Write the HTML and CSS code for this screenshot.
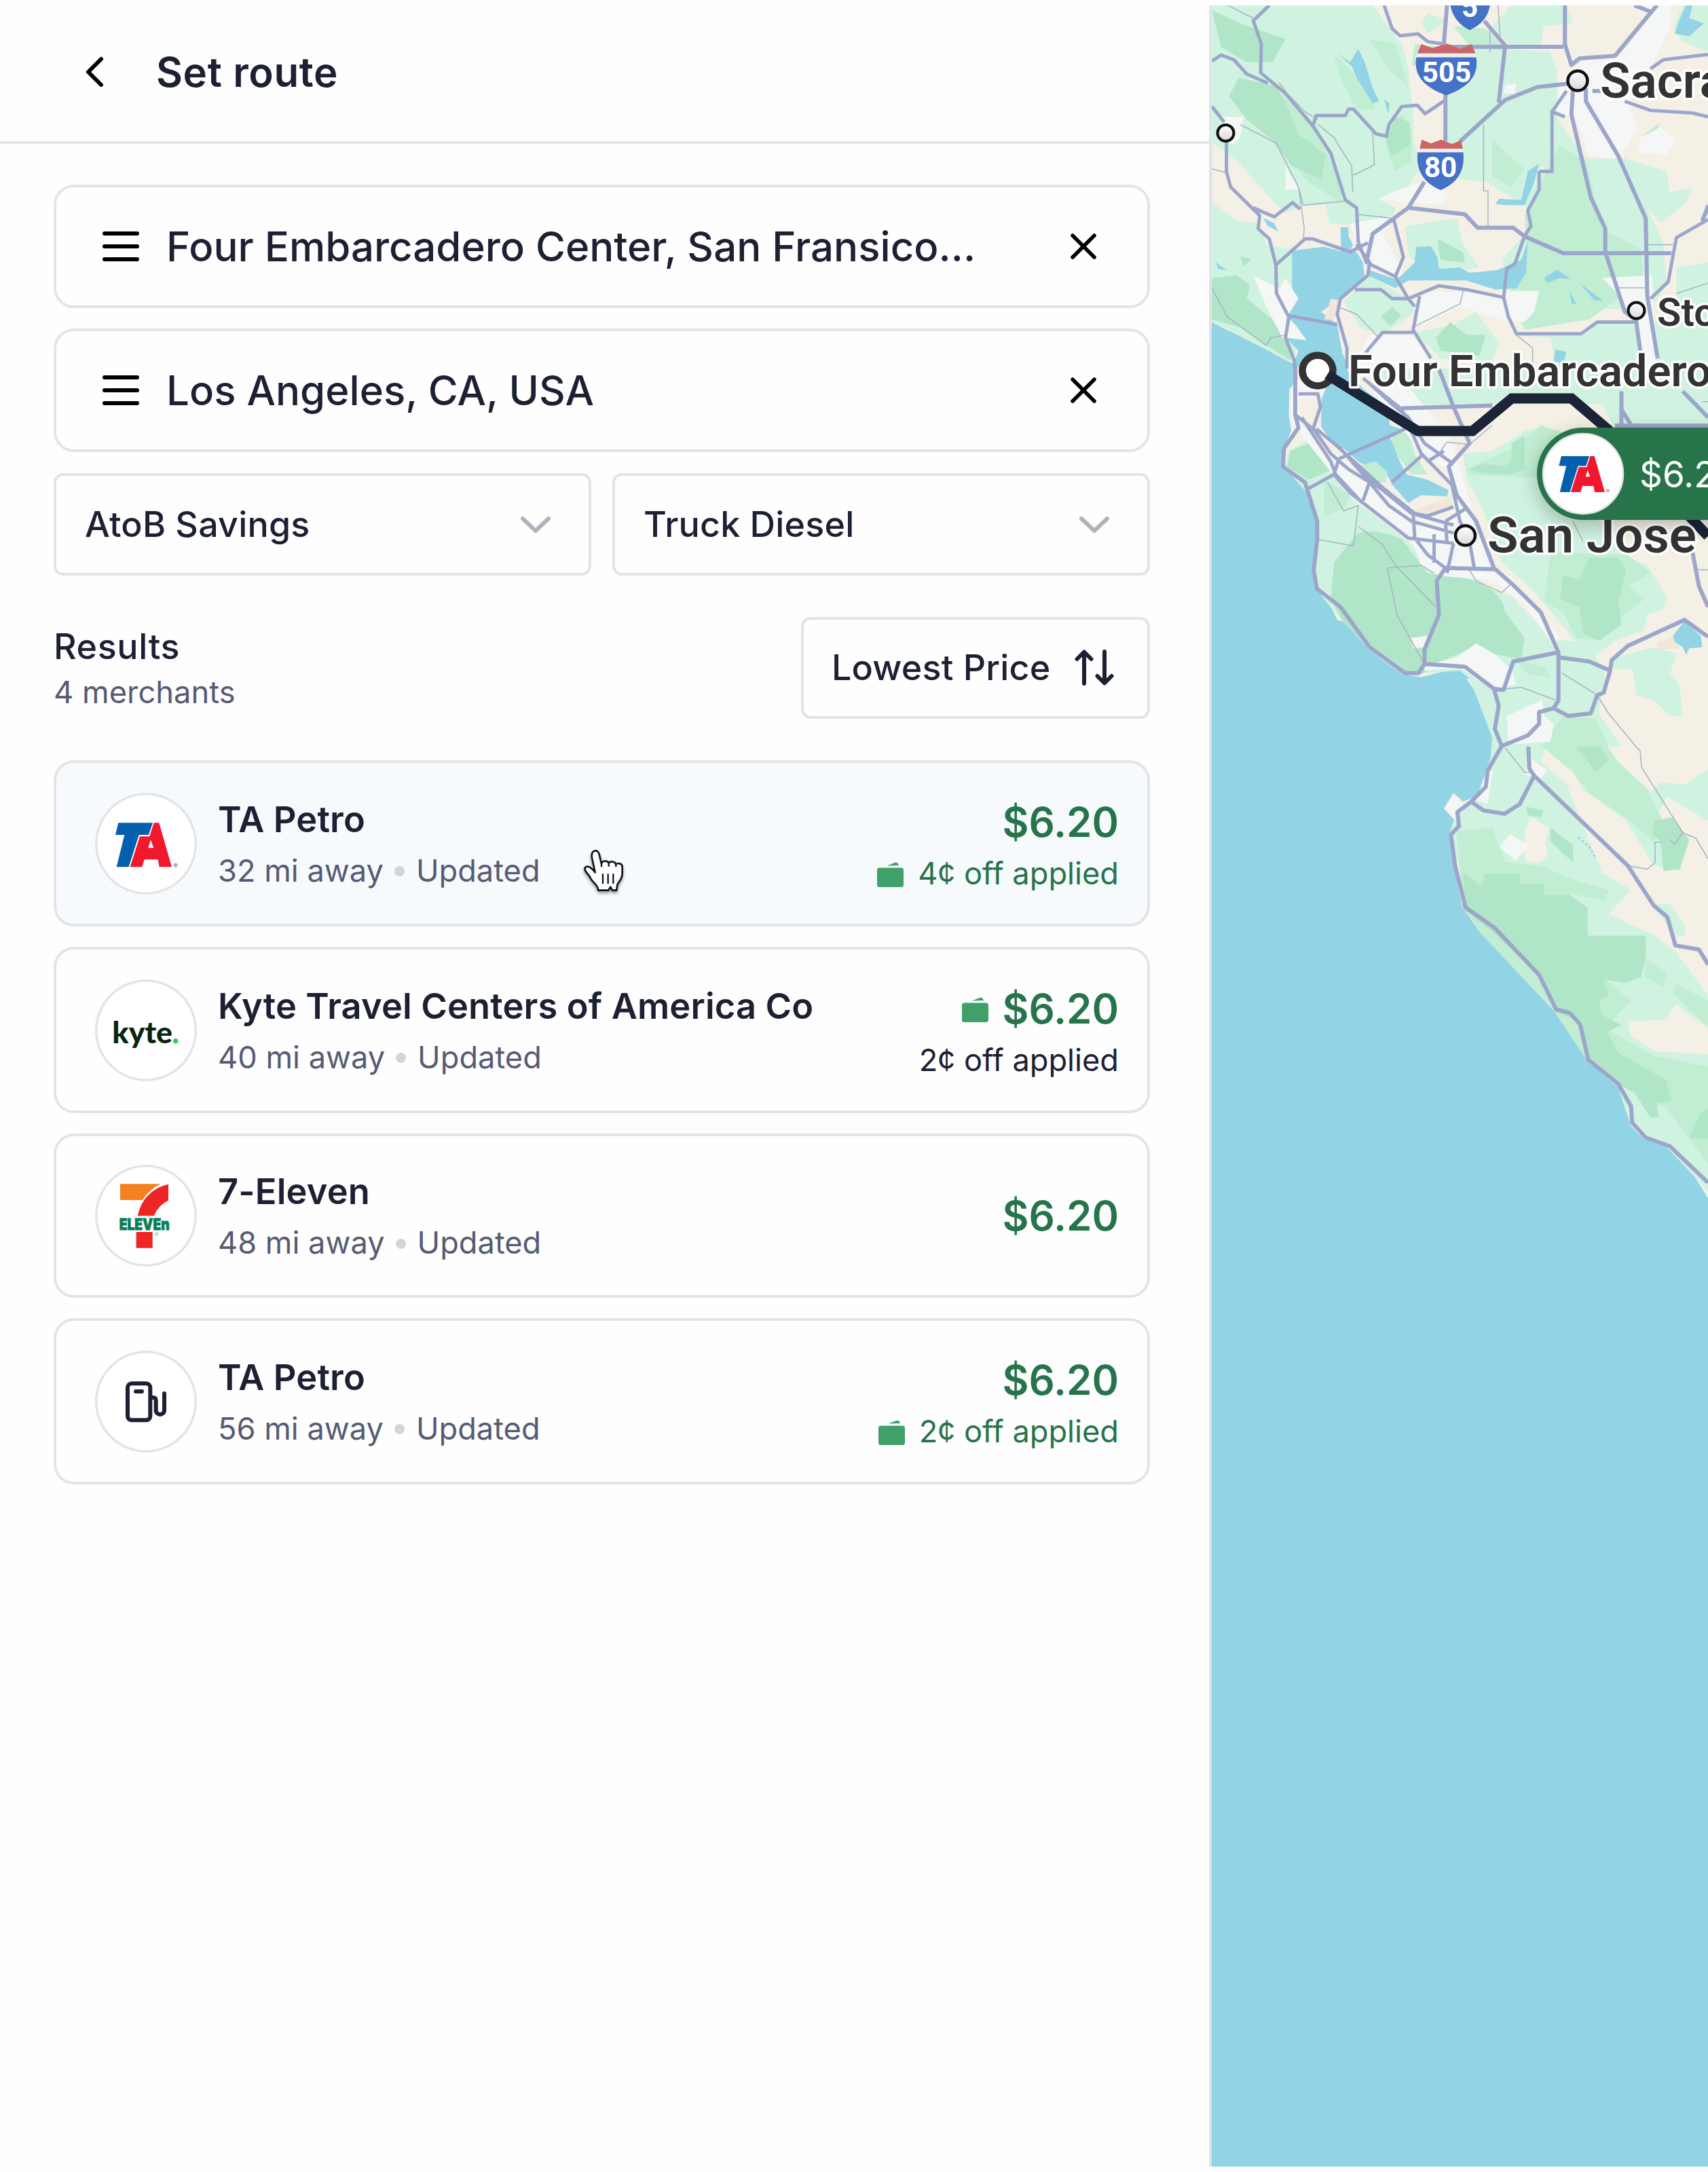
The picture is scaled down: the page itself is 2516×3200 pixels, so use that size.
FILE: index.html
```html
<!DOCTYPE html>
<html lang="en">
<head>
<meta charset="utf-8">
<title>Set route</title>
<link rel="stylesheet" href="styles.css">
</head>
<body>
<svg class="sprite" aria-hidden="true">
  <symbol id="ta-logo" viewBox="60 50 450 450">
    <path fill="#0460ae" d="M163 183H315L297 236H254L209 378H155L190 236H150Z"/>
    <path fill="#f0182d" fill-rule="evenodd" d="M320 183H343L399 378H344L338 345H278L268 378H215L258 243H301ZM306 258L295 294H319Z"/>
    <circle cx="416" cy="370" r="8" fill="none" stroke="#999" stroke-width="3"/><circle cx="416" cy="370" r="4" fill="#777"/>
  </symbol>
  <symbol id="wallet" viewBox="0 0 39 37">
    <path fill="#40a069" d="M3.500 8.500H35.500Q39 8.500 39 12V33.500Q39 37 35.500 37H3.500Q0 37 0 33.500V12Q0 8.500 3.500 8.500ZM14.500 5.500L27 .800Q30.500 0 32 5Z"/>
  </symbol>
  <symbol id="grip" viewBox="0 0 54 44">
    <path d="M3 3H51M3 22H51M3 41H51" fill="none" stroke="#000" stroke-width="6" stroke-linecap="round"/>
  </symbol>
  <symbol id="close" viewBox="0 0 40 40">
    <path d="M4 4L36 36M36 4L4 36" fill="none" stroke="#000" stroke-width="5.500" stroke-linecap="round"/>
  </symbol>
  <symbol id="chevron" viewBox="0 0 46 28">
    <path d="M4 4L23 22L42 4" fill="none" stroke="#b0b3bc" stroke-width="6" stroke-linecap="round" stroke-linejoin="round"/>
  </symbol>
</svg>

<div class="app">
  <main class="panel">
    <header class="header">
      <svg class="back" viewBox="0 0 26 46"><path d="M23 4L4 23L23 42" fill="none" stroke="#000" stroke-width="6" stroke-linecap="round" stroke-linejoin="round"/></svg>
      <h1 class="title">Set route</h1>
    </header>

    <div class="content">
      <div class="stops">
        <div class="stop"><svg class="grip"><use href="#grip"/></svg><span class="stop-name">Four Embarcadero Center, San Fransico...</span><svg class="close"><use href="#close"/></svg></div>
        <div class="stop"><svg class="grip"><use href="#grip"/></svg><span class="stop-name">Los Angeles, CA, USA</span><svg class="close"><use href="#close"/></svg></div>
      </div>

      <div class="filters">
        <div class="select"><span>AtoB Savings</span><svg class="chevron"><use href="#chevron"/></svg></div>
        <div class="select"><span>Truck Diesel</span><svg class="chevron"><use href="#chevron"/></svg></div>
      </div>

      <div class="results-bar">
        <div class="results-text">
          <h2 class="results-title">Results</h2>
          <div class="results-count">4 merchants</div>
        </div>
        <div class="sort">
          <span>Lowest Price</span>
          <svg class="sort-icon" viewBox="0 0 58 53"><path d="M14 50V4M3.500 14L14 3.500L24.500 14M44 3V49M33.500 39L44 49.500L54.500 39" fill="none" stroke="#1c2033" stroke-width="6" stroke-linecap="round" stroke-linejoin="round"/></svg>
        </div>
      </div>

      <div class="cards">
        <article class="card active">
          <div class="logo"><svg viewBox="60 50 450 450"><use href="#ta-logo" x="60" y="50" width="450" height="450"/></svg></div>
          <div class="info">
            <h3 class="name">TA Petro</h3>
            <div class="meta"><span>32 mi away</span><i class="dot"></i><span>Updated</span></div>
          </div>
          <div class="price-box">
            <div class="price">$6.20</div>
            <div class="discount"><svg class="wallet"><use href="#wallet"/></svg>4¢ off applied</div>
          </div>
          <svg class="cursor" viewBox="0 0 240 240">
            <path d="M80 136L66 72C60 36 92 30 98 56L108 98C112 82 136 82 140 96C146 84 168 86 172 101C180 92 200 96 200 112V140C200 164 188 172 178 190L175 215H156L148 200L138 215H94C92 188 68 182 58 158C50 142 28 128 36 114C46 102 64 116 80 136Z" fill="#fff" stroke="#10141c" stroke-width="8" stroke-linejoin="round"/>
            <path d="M108 98V112M140 98V110M172 102V112M114 142V186M137 142V186M160 142V186" fill="none" stroke="#10141c" stroke-width="7"/>
          </svg>
        </article>

        <article class="card">
          <div class="logo"><svg viewBox="60 876 450 450">
            <text class="kyte" x="136" y="1158" textLength="266" lengthAdjust="spacingAndGlyphs">kyte</text>
            <circle cx="416" cy="1148" r="11" fill="#1fd65a"/>
          </svg></div>
          <div class="info">
            <h3 class="name">Kyte Travel Centers of America Co</h3>
            <div class="meta"><span>40 mi away</span><i class="dot"></i><span>Updated</span></div>
          </div>
          <div class="price-box">
            <div class="price"><svg class="wallet"><use href="#wallet"/></svg>$6.20</div>
            <div class="discount plain">2¢ off applied</div>
          </div>
        </article>

        <article class="card short">
          <div class="logo"><svg viewBox="60 45 450 450">
            <path fill="#f58020" d="M171 130H349Q298 156 270 201H171Z"/>
            <path fill="#ee2524" d="M384 131V203Q340 224 320 271H248Q273 158 384 131ZM242 342H314V413H242Z"/>
            <text class="eleven" x="167" y="332" textLength="222" lengthAdjust="spacingAndGlyphs">ELEVEn</text>
            <circle cx="332" cy="351" r="6" fill="none" stroke="#6fae9a" stroke-width="3"/>
          </svg></div>
          <div class="info">
            <h3 class="name">7-Eleven</h3>
            <div class="meta"><span>48 mi away</span><i class="dot"></i><span>Updated</span></div>
          </div>
          <div class="price-box single"><div class="price">$6.20</div></div>
        </article>

        <article class="card">
          <div class="logo"><svg viewBox="60 866 450 450">
            <g fill="none" stroke="#1c2036" stroke-width="18" stroke-linecap="round" stroke-linejoin="round">
              <rect x="204" y="1011" width="100" height="162" rx="18"/>
              <path d="M240 1046H267M311 1073H316Q329 1073 329 1086V1133A19 19 0 0 0 366 1133V1055"/>
            </g>
          </svg></div>
          <div class="info">
            <h3 class="name">TA Petro</h3>
            <div class="meta"><span>56 mi away</span><i class="dot"></i><span>Updated</span></div>
          </div>
          <div class="price-box">
            <div class="price">$6.20</div>
            <div class="discount"><svg class="wallet"><use href="#wallet"/></svg>2¢ off applied</div>
          </div>
        </article>
      </div>
    </div>
  </main>

  <aside class="map">
    <svg class="map-canvas" viewBox="1785 8 731 3184">
      <defs>
        <linearGradient id="pin" x1="0" y1="0" x2="0" y2="1"><stop offset="0" stop-color="#fff"/><stop offset="1" stop-color="#d8d8d8"/></linearGradient>
      </defs>

      <!-- central coast -->
      <g transform="translate(1770 1000) scale(.47577 .5102)">
        <path class="land" d="M820 0L850 40L880 110L900 170L895 230L882 300L850 340L810 355L780 330L750 375L785 410L766 450L785 560L808 660L860 730L940 765L1042 860L1092 960L1137 970L1165 1000L1192 1100L1290 1180L1325 1240L1328 1290L1370 1330L1440 1352L1515 1420L1568 1500V0Z"/>
        <path class="g1" d="M830 0H1120L1100 90L1200 120L1290 240L1390 325L1420 300L1500 305L1568 260V410L1440 340L1400 420L1510 470L1480 555L1400 540L1310 405L1180 320L1110 200L1065 200L1050 240L1130 305L1240 560L1330 610L1260 680L1400 740L1470 790L1568 915V1010L1470 940L1430 985L1320 990L1330 1030L1400 1075L1568 1085V1480L1440 1352L1328 1290L1290 1180L1192 1100L1092 960L860 730L766 450L785 400L850 350L895 230L900 170Z"/>
        <path class="g1" d="M1338 0H1480L1498 105L1470 110L1440 80L1370 60ZM1395 650L1450 650L1500 720L1495 745L1465 740Z"/>
        <path class="g2" d="M1090 110L1200 120L1290 240L1380 320L1440 430L1400 470L1310 400L1200 330L1150 270L1060 200ZM790 440L900 430L940 530L1050 540L1150 580L1260 610L1250 640L1140 620L1200 740L1240 860L1330 930L1250 1010L1400 1090L1568 1120V1400L1440 1240L1330 1190L1192 1100L1092 960L860 730L808 660ZM1380 810L1440 850L1430 890L1370 860ZM1470 880L1568 930V1005L1460 910Z"/>
        <path class="g3" d="M1130 165L1200 170L1235 145L1258 170L1230 190L1262 235L1220 270L1180 220ZM875 563H985V593H1060V625H1140L1195 660V742H1375V810L1360 862L1310 878L1245 870L1262 915L1232 930L1240 970L1300 1000L1255 1020L1290 1080L1440 1160L1455 1220L1410 1225L1415 1265L1390 1268L1340 1195L1290 1170L1192 1100L1165 990L1092 960L1045 860L900 730L815 670L810 560L868 600ZM1400 410L1460 400L1510 465L1480 550L1430 555L1422 470L1396 450ZM1540 1260L1568 1240V1330L1510 1325ZM1005 370L1060 380L1050 400L1010 395ZM1080 430L1150 480L1150 530L1080 470Z"/>
        <path class="land" d="M1020 398L1078 432L1065 470L1070 515L1040 533L1000 525L1000 440Z"/>
        <path class="town" d="M942 110L1055 62L1058 105L1092 130L1080 180L1000 192H945ZM780 332L810 365L790 385V410L752 375ZM922 485L955 450L1015 480L972 525ZM885 260L902 268L885 362L850 350ZM1020 230L1070 265L1050 290L1000 275Z"/>
        <path class="thin" d="M920 30L990 25L1100 65M1140 0L1220 45L1250 110L1358 208L1362 255L1490 445L1530 460L1568 520M940 200L1000 270H1025M1320 540L1380 550L1405 530L1403 472H1425M1450 465L1465 478L1490 443M1240 0L1250 95H1205"/>
        <path class="creek" d="M1165 458L1200 485L1218 514"/>
        <path class="road" d="M860 0L905 32L938 30L948 0M905 32L918 80L908 140L932 190L886 265L880 312L835 355L792 385L797 425L772 450L785 540L817 660L908 720L1045 855L1098 955L1140 965L1172 998L1197 1100L1290 1170L1330 1235L1333 1282L1375 1325L1450 1350L1568 1455M932 190L1010 160L1045 130L1040 95L1088 88L1108 70V0M1088 88L1135 110L1205 100L1225 48L1245 40L1260 0M1010 160L1015 260L1030 280L985 362L938 390L872 380L835 355M1030 280L1320 540L1400 655L1442 688L1467 770L1540 782L1568 825"/>
      </g>

      <!-- peninsula and San Jose -->
      <g transform="translate(1770 500) scale(.47577 .38265)">
        <path class="land" d="M160 0L230 60L285 95L300 160L272 190L270 290L280 370L250 420L250 490L320 560L345 670L358 740L342 900L355 960L405 1040L420 1080L445 1090L520 1195L620 1290L680 1300L760 1275L800 1275L845 1320L880 1400L905 1568H1568V0Z"/>
        <path class="g1" d="M560 0H1120L1180 30L1568 0V340H1280L1240 250L600 250L560 210ZM270 430L340 380L420 500L470 620L560 700L650 790L700 870L730 925L830 890L880 950L960 990L1060 1120L1120 1160L1200 1170L1250 1290L1230 1440L1300 1568H905L880 1400L845 1320L800 1275L640 1290L520 1195L420 1060L350 950L360 740L340 610L255 490ZM810 440L900 430L1010 345L1140 360V640L1300 750L1320 840L1380 870L1440 990L1430 1040L1380 1060L1370 1120L1280 1160L1200 1240L1130 1120L1020 960L930 860L870 650L820 540ZM1260 1230L1400 1185L1470 1210L1450 1290L1480 1330L1490 1450L1450 1450L1400 1390L1345 1370L1335 1270L1280 1270Z"/>
        <path class="g2" d="M590 350L640 360L660 440L700 520L650 520L590 420ZM1050 330L1120 360V540L830 520L820 500L960 420ZM1080 820L1320 830L1390 900L1320 950L1370 1000L1290 1080L1240 1160L1160 1150L1120 1050L1060 1010ZM970 1230L1060 1260L1080 1300L1010 1290ZM1120 1450L1220 1460L1260 1568H1050ZM490 490L540 475L570 540L520 545ZM380 540L460 600L440 650L380 680Z"/>
        <path class="g3" d="M275 430L350 390L410 500L330 540L265 490ZM480 750Q530 720 620 770L700 900L820 920Q930 960 940 1050L1000 1150L990 1230L900 1210L850 1180L760 1230L680 1290H620L520 1190L440 1090L400 1000L410 860ZM1200 840H1290L1315 890L1290 1010L1300 1100L1230 1160L1180 1130L1170 1030L1110 1000L1120 910L1170 925ZM960 400L1000 370V500L960 520L870 515L830 500L870 480L940 490L960 460ZM740 0H870V40L740 20Z"/>
        <path class="town" d="M285 150L385 180L370 220L300 230L310 330L400 430L460 480L510 550L590 590L650 670L760 690L780 600L760 500L680 440L620 340L520 180L620 150L770 380L800 500L850 700L900 870L960 920L1110 1150L1090 1180L1000 1020L900 930L740 910L680 870L650 770L490 620L400 510L285 330L255 420L285 360L275 250ZM790 1225L850 1170L905 1210L960 1270L975 1330L900 1345L800 1265L690 1275V1255ZM648 1150L705 1140L690 1185L655 1190ZM945 1450L1055 1388L1060 1450L1090 1480L1080 1550L950 1560Z"/>
        <path class="sand" d="M650 660L720 630L770 605L780 640L700 670ZM1410 1170L1465 1140L1480 1190L1410 1195Z"/>
        <path class="bay" d="M285 0H440L452 120L500 190L580 265L582 330L630 350L585 380L610 460L635 520L700 540L765 580L760 605L680 600L640 630L590 560L570 510L490 475L440 420L400 390L370 335L372 230L395 150L370 60L290 60Z"/>
        <path class="water" d="M1460 1140L1495 1085L1545 1140L1550 1185L1510 1190L1500 1215L1490 1185L1465 1165ZM1090 35L1130 40L1125 90L1095 80Z"/>
        <path class="land" d="M303 235L360 220L358 290L335 335L303 280Z"/>
        <path class="g2" d="M490 485L540 470L575 510L570 550L530 550Z"/>
        <path class="thin" d="M1000 0L1030 40V100M360 770L470 795L485 640L440 660L390 550M485 720L560 790L600 870L725 1030M575 880L680 870L720 900M575 880L585 940L605 1060L685 1240M830 890L850 930L930 975L955 945M900 330L830 405L760 395L740 430M1115 1285L1220 1365M910 1350L990 1340L1100 1390M1225 1370L1260 1440L1345 1568M1150 700L1180 775M1530 887H1568M1550 240H1568"/>
        <path class="road mid" d="M300 210H360L368 260L345 345M290 290L350 350L400 440L455 500L520 550L580 640L650 700L780 745M355 345L430 420L500 520L590 610L650 670L780 715M330 575L410 520L425 460L630 345M310 300L400 470L415 520L490 620L640 765L780 785M410 400L560 570L660 670L700 680L780 645M410 520L460 590L490 620M520 550L500 620M500 150L620 270L680 440L775 560L800 700L830 780L845 885M520 170L590 250L640 300L690 400L780 480M590 550L680 450M700 470L750 430M655 665L660 765L700 830L755 880M755 700L760 785M755 700L820 650M720 750V860M780 785L760 900"/>
        <path class="road" d="M255 0L290 100L290 290L300 340L255 420L252 490L320 550L358 700L358 770L347 890L357 960L430 1030L520 1185L630 1285H672L690 1250L815 1260L905 1345L935 1350L965 1240L1105 1205V1390L1090 1420L1045 1435V1480L1010 1525L925 1568M905 1345L920 1410L908 1500L930 1568M690 1250V1195L735 1060L728 930L755 880L910 885M620 265L900 255M680 0L720 70L740 130L780 260L830 400L765 490L790 600L850 700L905 880L960 940L1050 1050L1105 1205M1110 1225L1200 1240L1265 1275L1245 1360L1225 1370L1205 1440L1135 1450L1090 1420M1265 1275L1270 1235L1320 1180L1495 1080L1568 1145M1300 200V330M1350 0L1358 40M1400 0L1412 50M1490 200L1568 300M1300 270L1330 330M1520 820L1540 950L1568 1030M1280 332H1568M440 0L455 60M555 0L510 40"/>
      </g>

      <!-- bay area and Sacramento valley -->
      <g transform="translate(1770 0) scale(.47577 .38265)">
        <path class="land" d="M32 20H1568V1420H452L440 1368H285L230 1360L200 1340L120 1270L85 1275L32 1240Z"/>
        <path class="g1" d="M32 20H530L590 120L620 170L640 260L655 440L655 540L680 640L640 720L545 765L600 800L585 870L520 870L395 860L385 790L330 790L255 820L240 800L110 620L32 550ZM32 780L110 850L180 860L200 940L280 960V1220L300 1310L285 1400L32 1240ZM700 50L760 80L700 130L680 90ZM740 180L950 190L1080 200L1100 270L1100 440L1090 640L1050 640L1010 800L880 700L800 690L740 630L760 360ZM960 20H1130L1150 90L1060 100L1050 180H960L900 100ZM1490 20H1568V200L1490 160L1460 110ZM1090 440L1190 610H1310L1380 800L1430 940L1440 1100L1390 1190H1080L1040 1120L950 1110L930 1000L1000 900L1010 780L1060 640ZM630 870L790 840L810 940L860 1030L700 1060L640 980ZM520 1060L640 1150L660 1200L560 1290L490 1260L440 1160ZM660 1280L780 1250L850 1200L920 1320L900 1400L740 1380ZM960 1290H1180L1230 1240H1568V1420H1100L1080 1300ZM1310 610L1440 660L1450 740L1520 720L1500 780L1420 860L1380 800ZM1470 1030L1568 1010V1260L1470 1230Z"/>
        <path class="g2" d="M120 310L260 370L350 500L440 720L430 780L330 700L240 560ZM410 210L500 320L540 420L480 420L430 300ZM620 440L650 500V620L600 660L570 560ZM900 540L1000 650L960 720L900 680ZM1110 560L1190 620L1240 880L1360 960L1370 1100L1300 1140L1200 1230L1000 1270L950 1130L1010 1000L1000 830L1060 680ZM660 170L740 180L730 270L650 250ZM520 150L600 170L640 330L580 270ZM780 100L880 110L950 200L830 180ZM1370 520L1420 470L1400 540L1360 560Z"/>
        <path class="g3" d="M115 300L230 330L270 420L300 520L340 550L385 600L370 690L280 640L220 540L140 460L85 370ZM32 1070L110 1060L150 1100L140 1150L250 1260L280 1390L200 1330L120 1260L32 1230ZM32 40L120 90L260 150L220 240H140L60 180ZM730 920L810 970L815 1010L740 1000ZM590 1180L618 1215L585 1255L555 1220ZM770 1240L820 1290L880 1290L860 1370L740 1350L725 1300ZM600 450L645 470V560L590 600L570 540ZM120 985L155 1000L130 1025Z"/>
        <path class="town" d="M65 450H130L120 530L100 555L50 540ZM1330 20H1450V110L1390 260L1320 400L1350 490L1290 610L1200 600L1160 460L1100 430L1110 320L1180 230L1300 210L1390 60ZM940 330L975 320L970 360L935 360ZM1360 530L1420 490L1470 540L1440 595L1350 590ZM550 765L610 730L690 700L770 750L740 790L640 780ZM160 1060L240 1110L260 1070L300 1150L280 1200L325 1310L250 1300L200 1180ZM460 860L600 830L560 900L620 1040L610 1080L500 1010L480 940ZM940 1120L1045 1120L1030 1200L1000 1240L950 1230ZM1240 1070L1395 1060L1400 1220L1340 1230L1280 1120ZM670 1120L930 1130L950 1240L800 1180L650 1270ZM1350 1220H1400L1410 1420H1350ZM520 1290L650 1290L740 1420H460ZM260 640L300 730L260 730Z"/>
        <path class="bay" d="M280 965L380 950L440 970L480 970L500 1010L505 1070L430 1150L370 1200L420 1250L445 1420H310L285 1400L300 1350L260 1300L325 1310L290 1250L265 1220L300 1150L280 1110ZM615 1065L660 1010L665 950L710 948L730 990L735 1035L800 1030L830 1050L915 1040L990 1000L1010 930L1005 1050L975 1110L910 1115L820 1080L640 1080L600 1110L515 1060L520 1040L600 1075ZM430 875H455V910L468 940L460 975H432Z"/>
        <path class="sand" d="M400 1150L425 1155L410 1230L380 1230Z"/>
        <path class="water" d="M420 205L460 240L485 188L505 240L530 340L550 390L530 398L480 300L465 255ZM565 380L582 400L578 440ZM1010 660L1045 630L1030 700L1000 790L940 790L910 785L920 765L990 770ZM1500 20H1520L1510 70L1555 90L1510 140L1465 130L1480 75ZM1060 1070L1100 1038L1145 1075L1110 1070L1070 1090ZM1140 1120L1160 1170H1145ZM1170 1090L1245 1160L1215 1155ZM1095 1345L1130 1355L1120 1400L1090 1390ZM45 1010L78 1040L50 1035ZM190 838L225 860L238 892L205 870Z"/>
        <path class="thin" d="M80 20L160 70M240 318L265 360L320 430L360 460M120 480L230 550L300 720L315 790L440 775M300 720L318 880L315 920M360 478L410 530L465 640L468 740M530 510L535 635L470 675M480 825L590 840M918 20L925 160M893 110V200M873 480V735H887V880M1380 942H1460M1290 1108H1380M1568 1090L1470 1130M32 1110L80 1220L200 1330L215 1300L260 1290M430 1185L480 1210L545 1295M655 1260L800 1170L810 1120M975 1290L1025 1340V1420M32 650L78 665"/>
        <path class="road mid" d="M32 410L70 470M77 540V660L90 720L180 830L175 880L210 920L230 1020L232 1130L270 1220L260 1300L288 1390V1420M160 800L225 835L282 780L305 805M230 1020L320 920H345L460 970L515 935M32 235L60 212L100 230L140 285L205 320M210 20L160 80L185 170L183 280L260 360L345 485L400 590L445 770L480 800L485 930L510 1010L600 1065L640 1150L660 1180M345 485L355 445H445L455 420H470L540 515L572 525L580 480L620 410L668 405L692 438L755 385M565 20L590 110L615 138L670 130L700 160L750 170M270 1215L420 1250M475 1115H555L590 1150H640L735 1100L820 1115L935 1145L950 1220L975 1285H1175L1225 1240H1350M1125 450L1085 430L1130 350M1045 660H1085V430M1045 660V730L1010 810L1020 870L1000 910L970 1015L945 1035L935 1150M595 845L625 990L600 1065M480 940L520 1010L515 1060L430 1150L420 1210L450 1340V1420M675 1140L655 1270L710 1380M655 1280H560L500 1370M1310 390L1390 425L1520 435L1568 450M1568 210L1430 230L1390 265M1550 850L1568 790M1568 845L1470 915L1445 1085L1390 1150"/>
        <path class="road" d="M760 20L750 170M755 360V545M690 700L640 800L530 900L510 1010M640 800L815 825L855 877H965L1000 910L1120 975H1455M800 545L940 385L1040 335L1150 320M755 180H1120M1125 20V170L1145 250L1170 225L1280 215L1410 20M1340 20L1390 45M875 80L940 175L920 395M1150 340L1145 440L1205 760L1250 880V970L1310 1200L1345 1230L1358 1350M1190 340L1190 390L1290 600L1375 840L1380 1140L1412 1380M1210 350L1240 350M1568 800L1550 850"/>
      </g>

      <!-- interstate shields -->
      <g class="shield">
        <g transform="translate(1770 0) scale(.47577 .38265)">
          <path fill="#4472c6" d="M770 20H893Q885 85 830 116Q780 85 770 20ZM665 220H850Q865 320 758 367Q650 320 665 220ZM669 586H810Q820 690 740 732Q660 690 669 586Z"/>
          <path fill="#cc6666" d="M680 170L715 185L760 168L800 188L836 170L848 206H668ZM682 538L710 552L741 538L775 555L803 540L809 573H675Z"/>
          <path fill="#f5eeee" d="M667 206H850V220H665ZM674 573H809V586H670Z"/>
        </g>
        <text x="2165" y="25" text-anchor="middle" font-size="42">5</text>
        <text x="2131" y="121" text-anchor="middle" font-size="42">505</text>
        <text x="2122" y="261" text-anchor="middle" font-size="42">80</text>
      </g>

      <!-- towns -->
      <g fill="url(#pin)" stroke="#111">
        <circle cx="2324" cy="119" r="14.500" stroke-width="4.500"/>
        <circle cx="1805.500" cy="196" r="12" stroke-width="4"/>
        <circle cx="2410.500" cy="457.500" r="12" stroke-width="4"/>
        <circle cx="2158.500" cy="789" r="14.500" stroke-width="4.500"/>
      </g>
      <circle cx="1941" cy="546" r="22.500" fill="#fff" stroke="#333" stroke-width="10.500"/>
      <path class="route" d="M1955 552L2088.500 635H2169L2227 587H2315L2370 634L2516 790"/>
      <g class="place">
        <text x="2357" y="144" font-size="73">Sacramento</text>
        <text x="2441" y="480" font-size="58">Stockton</text>
        <text x="1986" y="569" font-size="65">Four Embarcadero Center</text>
        <text x="2191" y="814" font-size="75" textLength="308" lengthAdjust="spacingAndGlyphs">San Jose</text>
      </g>

      <!-- selected merchant -->
      <g class="pill">
        <rect x="2264" y="630" width="420" height="136" rx="68" fill="#28744a"/>
        <circle cx="2332" cy="698" r="59" fill="#fff" stroke="#e2e3e6" stroke-width="2.500"/>
        <use href="#ta-logo" x="2272" y="636" width="122" height="122"/>
        <text x="2415" y="718">$6.20</text>
      </g>
    </svg>
  </aside>
</div>
</body>
</html>
```
FILE: styles.css
```css
* { box-sizing: border-box; }
body { margin: 0; background: #fefefe; font-family: Inter, "Liberation Sans", sans-serif; color: #1c2033; }
h1, h2, h3 { margin: 0; font-weight: inherit; }
svg { display: block; flex: none; }
.sprite { position: absolute; width: 0; height: 0; }

.app { display: flex; width: 2516px; height: 3200px; overflow: hidden; }
.panel { width: 1781px; flex: none; }

.header { display: flex; align-items: center; gap: 78px; height: 212px; padding: 0 0 0 126px; border-bottom: 4px solid #e3e4e8; }
.back { width: 26px; height: 46px; margin-top: 3px; }
.title { font-size: 60px; line-height: 80px; font-weight: 600; letter-spacing: .6px; margin-top: 3px; white-space: nowrap; }

.content { padding: 60px 87px 0 79px; }
.stops { display: flex; flex-direction: column; gap: 30px; }
.stop { display: flex; align-items: center; height: 182px; padding: 0 74px 0 68px; border: 4px solid #e3e4e8; border-radius: 30px; }
.grip { width: 54px; height: 44px; }
.stop-name { flex: 1; margin-left: 40px; font-size: 60px; font-weight: 500; white-space: nowrap; }
.close { width: 40px; height: 40px; }

.filters { display: flex; gap: 31px; margin-top: 31px; }
.select { flex: 1; display: flex; align-items: center; justify-content: space-between; height: 151px; padding: 0 55px 0 42px; border: 4px solid #e3e4e8; border-radius: 14px; font-size: 52px; font-weight: 500; letter-spacing: .2px; white-space: nowrap; }
.chevron { width: 46px; height: 28px; margin-top: 2px; }

.results-bar { display: flex; align-items: center; justify-content: space-between; height: 150px; margin-top: 61px; }
.results-text { padding-top: 4px; white-space: nowrap; }
.results-title { font-size: 52px; line-height: 67px; font-weight: 500; letter-spacing: .6px; }
.results-count { font-size: 45.3px; line-height: 67px; color: #565b73; }
.sort { display: flex; align-items: center; justify-content: space-between; width: 514px; height: 150px; padding: 0 49px 2px 41px; border: 4px solid #e3e4e8; border-radius: 14px; font-size: 52px; font-weight: 500; letter-spacing: .2px; white-space: nowrap; }
.sort-icon { width: 58px; height: 53px; }

.cards { display: flex; flex-direction: column; gap: 30px; margin-top: 61px; }
.card { position: relative; display: flex; align-items: center; height: 245px; padding: 0 42px 0 57px; border: 4px solid #e3e4e8; border-radius: 30px; background: #fefefe; white-space: nowrap; }
.card.short { height: 242px; }
.card.active { background: #f7fafd; }
.logo { width: 150px; height: 150px; flex: none; border-radius: 50%; background: #fff; box-shadow: inset 0 0 0 3.5px #e3e4e8; }
.logo svg { width: 150px; height: 150px; }
.info { flex: 1; margin-left: 31px; padding-top: 4px; }
.name { font-size: 52.4px; line-height: 76px; font-weight: 600; letter-spacing: .15px; }
.meta { display: flex; align-items: center; font-size: 45.2px; line-height: 76px; color: #565b73; }
.dot { width: 15px; height: 15px; margin: 2px 17px 0 16px; border-radius: 50%; background: #d1d4d8; }
.price-box { display: flex; flex-direction: column; align-items: flex-end; padding-top: 13px; }
.price-box.single { padding-top: 0; }
.price { display: flex; align-items: center; gap: 20px; font-size: 60px; line-height: 76px; font-weight: 600; color: #26744a; }
.discount { display: flex; align-items: center; gap: 21px; font-size: 45.2px; line-height: 76px; color: #26744a; }
.discount.plain { color: #1c2033; }
.wallet { width: 39px; height: 37px; margin-top: 2px; }
.kyte { font: 900 133px Lato, sans-serif; fill: #07260f; }
.eleven { font: 900 70px Inter, sans-serif; fill: #0a7d5a; stroke: #0a7d5a; stroke-width: 2.5; }
.cursor { position: absolute; left: 767px; top: 116px; width: 80px; height: 80px; filter: drop-shadow(0 3px 2px rgba(0, 0, 0, .4)); }

.map { flex: 1; margin: 8px 0; border-left: 4px solid #e1e3e6; background: #92d4e6; overflow: hidden; }
.map-canvas { width: 731px; height: 3184px; }
.land { fill: #f5f0e6; }
.g1 { fill: #d0f2e0; }
.g2 { fill: #c1edd3; }
.g3 { fill: #b1e5c7; }
.town { fill: #f5f6f6; }
.sand { fill: #f1e6d8; }
.bay, .water { fill: #92d4e6; }
.road, .thin, .creek { fill: none; stroke: #9ca6cb; stroke-width: 6; stroke-linejoin: round; vector-effect: non-scaling-stroke; }
.road.mid { stroke-width: 5; }
.thin { stroke: #a5b3c3; stroke-width: 1.5; }
.creek { stroke: #8fd3e8; stroke-width: 2.5; stroke-dasharray: 4 3; }
.shield text { font-family: Roboto, sans-serif; font-weight: 700; fill: #fff; }
.route { fill: none; stroke: #1c2438; stroke-width: 15; }
.place { font-family: Roboto, sans-serif; font-weight: 600; fill: #333; stroke: #fff; stroke-width: 7; stroke-linejoin: round; paint-order: stroke; }
.pill { filter: drop-shadow(0 8px 14px rgba(0, 0, 0, .25)); }
.pill text { font: 400 53px Inter, sans-serif; fill: #fff; }
```
